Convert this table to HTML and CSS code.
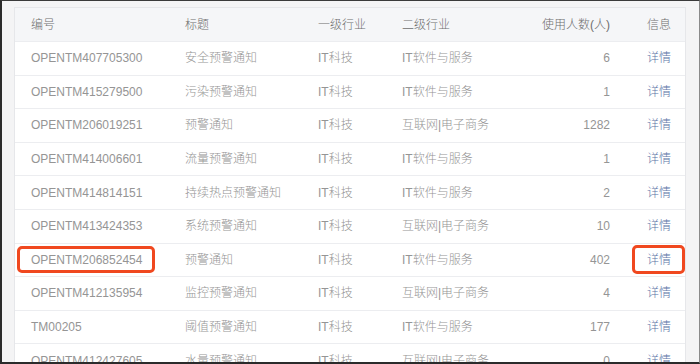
FILE: index.html
```html
<!DOCTYPE html>
<html lang="zh">
<head>
<meta charset="utf-8">
<link rel="stylesheet" href="styles.css">
</head>
<body>
<div class="frame">
  <div class="table">
    <div class="row head">
      <div class="c">编号</div><div class="c">标题</div><div class="c">一级行业</div><div class="c">二级行业</div><div class="c num">使用人数(人)</div><div class="c info">信息</div>
    </div>
    <div class="row">
      <div class="c">OPENTM407705300</div><div class="c">安全预警通知</div><div class="c">IT科技</div><div class="c">IT软件与服务</div><div class="c num">6</div><div class="c info"><span class="link">详情</span></div>
    </div>
    <div class="row">
      <div class="c">OPENTM415279500</div><div class="c">污染预警通知</div><div class="c">IT科技</div><div class="c">IT软件与服务</div><div class="c num">1</div><div class="c info"><span class="link">详情</span></div>
    </div>
    <div class="row">
      <div class="c">OPENTM206019251</div><div class="c">预警通知</div><div class="c">IT科技</div><div class="c">互联网|电子商务</div><div class="c num">1282</div><div class="c info"><span class="link">详情</span></div>
    </div>
    <div class="row">
      <div class="c">OPENTM414006601</div><div class="c">流量预警通知</div><div class="c">IT科技</div><div class="c">IT软件与服务</div><div class="c num">1</div><div class="c info"><span class="link">详情</span></div>
    </div>
    <div class="row">
      <div class="c">OPENTM414814151</div><div class="c">持续热点预警通知</div><div class="c">IT科技</div><div class="c">IT软件与服务</div><div class="c num">2</div><div class="c info"><span class="link">详情</span></div>
    </div>
    <div class="row">
      <div class="c">OPENTM413424353</div><div class="c">系统预警通知</div><div class="c">IT科技</div><div class="c">互联网|电子商务</div><div class="c num">10</div><div class="c info"><span class="link">详情</span></div>
    </div>
    <div class="row">
      <div class="c"><span class="mark mark-id">OPENTM206852454</span></div><div class="c">预警通知</div><div class="c">IT科技</div><div class="c">IT软件与服务</div><div class="c num">402</div><div class="c info"><span class="link mark mark-link">详情</span></div>
    </div>
    <div class="row">
      <div class="c">OPENTM412135954</div><div class="c">监控预警通知</div><div class="c">IT科技</div><div class="c">互联网|电子商务</div><div class="c num">4</div><div class="c info"><span class="link">详情</span></div>
    </div>
    <div class="row">
      <div class="c">TM00205</div><div class="c">阈值预警通知</div><div class="c">IT科技</div><div class="c">IT软件与服务</div><div class="c num">177</div><div class="c info"><span class="link">详情</span></div>
    </div>
    <div class="row">
      <div class="c">OPENTM412427605</div><div class="c">水量预警通知</div><div class="c">IT科技</div><div class="c">互联网|电子商务</div><div class="c num">0</div><div class="c info"><span class="link">详情</span></div>
    </div>
  </div>
</div>
</body>
</html>
```

FILE: styles.css
```css
html, body {
  margin: 0;
  padding: 0;
}
body {
  width: 700px;
  height: 364px;
  overflow: hidden;
  font-family: "Liberation Sans", "Noto Sans CJK SC", sans-serif;
  font-size: 12px;
}
.frame {
  box-sizing: border-box;
  width: 700px;
  height: 364px;
  background: #f4f4f5;
  border-left: 2px solid #2b2b2b;
  border-top: 1px solid #3a3a3a;
  border-bottom: 2px solid #2b2b2b;
  border-right: 1px solid #8a8a8a;
  padding: 6px 13px 0 12px;
  overflow: hidden;
}
.table {
  background: #fff;
  border: 1px solid #e6e7ea;
  border-bottom: none;
}
.row {
  display: grid;
  grid-template-columns: 154px 133px 84px 114px 126px 59px;
  height: 33.6px;
  align-items: center;
  border-top: 1px solid #ecedf0;
  box-sizing: border-box;
  color: #959595;
  font-weight: 300;
}
.row.head {
  border-top: none;
  height: 33px;
  background: #f5f6f8;
  color: #6e6e6e;
}
.c {
  padding-left: 16px;
  white-space: nowrap;
  line-height: 18px;
}
.c.num {
  text-align: right;
  padding-left: 0;
  padding-right: 16px;
}
.c.info {
  padding-left: 21px;
}
.link {
  color: #5a73a6;
}
.mark {
  position: relative;
}
.mark::after {
  content: "";
  position: absolute;
  border: 3px solid #f0481f;
  border-radius: 5px;
}
.mark-id::after {
  left: -14px;
  right: -13px;
  top: -7px;
  bottom: -6px;
}
.mark-link::after {
  left: -15px;
  right: -14px;
  top: -8px;
  bottom: -7px;
}
```
